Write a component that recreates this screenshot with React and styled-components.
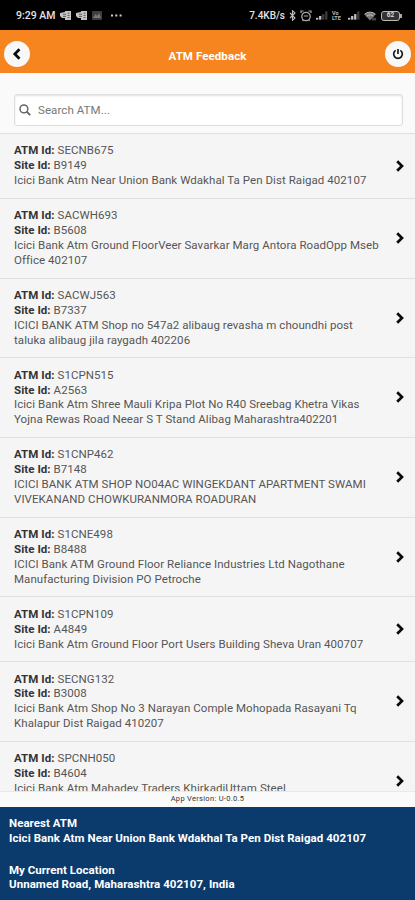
import React from "react";
import styled, { createGlobalStyle } from "styled-components";

const GlobalStyle = createGlobalStyle`
  * {
    box-sizing: border-box;
  }

  body {
    margin: 0;
    background: #fafafa;
    font-family: Roboto, "Liberation Sans", sans-serif;
    color: #555;
  }
`;

const ATMS = [
  {
    id: "SECNB675",
    site: "B9149",
    address: ["Icici Bank Atm Near Union Bank Wdakhal Ta Pen Dist Raigad 402107"]
  },
  {
    id: "SACWH693",
    site: "B5608",
    address: [
      "Icici Bank Atm Ground FloorVeer Savarkar Marg Antora RoadOpp Mseb",
      "Office 402107"
    ]
  },
  {
    id: "SACWJ563",
    site: "B7337",
    address: [
      "ICICI BANK ATM Shop no 547a2 alibaug revasha m choundhi post",
      "taluka alibaug jila raygadh 402206"
    ]
  },
  {
    id: "S1CPN515",
    site: "A2563",
    address: [
      "Icici Bank Atm Shree Mauli Kripa Plot No R40 Sreebag Khetra Vikas",
      "Yojna Rewas Road Neear S T Stand Alibag Maharashtra402201"
    ]
  },
  {
    id: "S1CNP462",
    site: "B7148",
    address: [
      "ICICI BANK ATM SHOP NO04AC WINGEKDANT APARTMENT SWAMI",
      "VIVEKANAND CHOWKURANMORA ROADURAN"
    ]
  },
  {
    id: "S1CNE498",
    site: "B8488",
    address: [
      "ICICI Bank ATM Ground Floor Reliance Industries Ltd Nagothane",
      "Manufacturing Division PO Petroche"
    ]
  },
  {
    id: "S1CPN109",
    site: "A4849",
    address: ["Icici Bank Atm Ground Floor Port Users Building Sheva Uran 400707"]
  },
  {
    id: "SECNG132",
    site: "B3008",
    address: [
      "Icici Bank Atm Shop No 3 Narayan Comple Mohopada Rasayani Tq",
      "Khalapur Dist Raigad 410207"
    ]
  },
  {
    id: "SPCNH050",
    site: "B4604",
    address: ["Icici Bank Atm Mahadev Traders KhirkadiUttam Steel", ""]
  }
];

const Screen = styled.div`
  display: flex;
  flex-direction: column;
  width: 415px;
  height: 900px;
  overflow: hidden;
`;

const StatusBar = styled.div`
  display: flex;
  flex: none;
  align-items: center;
  justify-content: space-between;
  height: 30px;
  padding: 1px 13px 0 16px;
  background: #000;
  color: #e4e4e4;
`;

const StatusGroup = styled.div`
  display: flex;
  align-items: center;
  gap: ${props => props.$gap}px;

  svg {
    display: block;
    flex: none;
  }
`;

const StatusText = styled.span`
  font-size: ${props => props.$size}px;
  font-weight: 500;
  line-height: 14px;
  white-space: nowrap;
`;

const Header = styled.header`
  display: flex;
  flex: none;
  align-items: center;
  justify-content: space-between;
  height: 43px;
  padding: 5px 4px 0;
  background: #f6841f;
`;

const Title = styled.h1`
  margin: 3px 0 0;
  color: #fff;
  font-size: 11.5px;
  font-weight: 700;
  line-height: 14px;
  letter-spacing: 0.08px;
`;

const RoundButton = styled.button`
  display: flex;
  align-items: center;
  justify-content: center;
  width: 26px;
  height: 26px;
  padding: 0;
  border: 0;
  border-radius: 50%;
  background: #f8f8f8;
  color: #000;
`;

const SearchArea = styled.div`
  flex: none;
  height: 60px;
  padding: 21px 12px 0 14px;
`;

const SearchBox = styled.label`
  display: flex;
  align-items: center;
  gap: 7px;
  height: 32px;
  padding: 0 5px 1px 4px;
  border: 1px solid #dedede;
  border-radius: 3px;
  background: #fff;
  box-shadow: inset 0 1px 2px rgba(0, 0, 0, 0.12);
`;

const SearchInput = styled.input`
  flex: 1;
  min-width: 0;
  padding: 0;
  border: 0;
  outline: 0;
  background: transparent;
  font-family: inherit;
  font-size: 11.5px;
  letter-spacing: 0.08px;

  &::placeholder {
    color: #777;
    opacity: 1;
  }
`;

const List = styled.div`
  flex: none;
  height: 658px;
  overflow: hidden;
  background: #f5f5f5;
`;

const Row = styled.div`
  display: flex;
  align-items: center;
  justify-content: space-between;
  padding: 9.4px 10px 9.75px 14px;
  border-top: 1px solid #e0e0e0;
`;

const Line = styled.div`
  height: 14.9px;
  font-size: 11.5px;
  line-height: 14.9px;
  letter-spacing: 0.06px;
  white-space: nowrap;
`;

const Label = styled.b`
  color: #333;
  font-weight: 700;
`;

const Version = styled.div`
  flex: none;
  height: 16px;
  border-top: 1px solid #e9e9e9;
  background: #fafafa;
  color: #333;
  font-size: 7.5px;
  line-height: 14px;
  letter-spacing: 0.3px;
  text-align: center;
`;

const Footer = styled.footer`
  display: flex;
  flex: 1;
  flex-direction: column;
  gap: 17px;
  padding: 9px 9px 0;
  background: #0b3b6d;
  color: #fff;
`;

const FooterLine = styled.div`
  font-size: 11.5px;
  font-weight: 700;
  line-height: 14.8px;
  letter-spacing: ${props => props.$spacing}px;
  white-space: nowrap;
`;

const ChevronIcon = ({ flip }) => (
  <svg width="10" height="14" viewBox="0 0 10 14">
    <path
      d={flip ? "M7.5 2.2 2.8 7l4.7 4.8" : "M2.2 2.2 7 7l-4.8 4.8"}
      fill="none"
      stroke="#0a0a0a"
      strokeWidth="2.7"
    />
  </svg>
);

const PowerIcon = () => (
  <svg width="12" height="12" viewBox="0 0 13 13">
    <path
      d="M4 2.6a4.7 4.7 0 1 0 5 0M6.5 1v5.5"
      fill="none"
      stroke="#151515"
      strokeWidth="1.8"
    />
  </svg>
);

const SearchIcon = () => (
  <svg width="12" height="12" viewBox="0 0 12 12">
    <circle cx="4.9" cy="4.9" r="3.9" fill="none" stroke="#666" strokeWidth="1.5" />
    <path d="M7.6 7.6 11.2 11.2" stroke="#666" strokeWidth="1.9" />
  </svg>
);

const NewsIcon = () => (
  <svg width="11" height="9" viewBox="0 0 11 9">
    <path d="M5 0h6v9H5V7H2L0 5V2l5-1z" fill="#c4c4c4" />
    <path d="M3 3.3h3M3 5.4h3M7.5 2.2h2M7.5 4.5h2M7.5 6.7h2" stroke="#444" strokeWidth=".8" />
  </svg>
);

const PictureIcon = () => (
  <svg width="10" height="9" viewBox="0 0 10 9">
    <rect width="10" height="9" rx="1" fill="#3d3d3d" />
    <path d="m1 7 2.5-4L5 5l2-3 2 5z" fill="#777" />
  </svg>
);

const DotsIcon = () => (
  <svg width="20" height="3" viewBox="0 0 20 3">
    <path d="M4 1.5h2M8.3 1.5h2M12.6 1.5h2" stroke="#ccc" strokeWidth="1.8" />
  </svg>
);

const BluetoothIcon = () => (
  <svg width="7" height="11" viewBox="0 0 7 11">
    <path d="m1 3 5 5-2.5 2.3V.7L6 3 1 8" fill="none" stroke="#bbb" strokeWidth="1.1" />
  </svg>
);

const AlarmIcon = () => (
  <svg width="12" height="12" viewBox="0 0 12 12">
    <circle cx="6" cy="6.5" r="4.2" fill="none" stroke="#aaa" strokeWidth="1.3" />
    <path
      d="M1 3V1h2.5M11 3V1H8.5M3.8 6h4.4M2.5 11l1-1.2M9.5 11l-1-1.2"
      fill="none"
      stroke="#aaa"
      strokeWidth="1.2"
    />
  </svg>
);

const SignalIcon = ({ bars }) => (
  <svg width="12" height="9" viewBox="0 0 13 9">
    {[2, 4, 6, 9].map((height, index) => (
      <rect
        key={index}
        x={index * 3.3}
        y={9 - height}
        width="2.5"
        height={height}
        fill={index < bars ? "#c0c0c0" : "#3c3c3c"}
      />
    ))}
  </svg>
);

const VolteLabel = styled.span`
  width: 12px;
  color: #bbb;
  font-size: 5.5px;
  font-weight: 700;
  line-height: 5px;
`;

const WifiIcon = () => (
  <svg width="12" height="10" viewBox="0 0 12 10">
    <path d="M.5 3.5a8 8 0 0 1 11 0L6 9.5z" fill="#777" />
    <path d="M.5 3.3a8 8 0 0 1 11 0M2.5 5.3a5 5 0 0 1 7 0" fill="none" stroke="#bbb" />
    <path d="M9 9.5V6.8M11 6.8v2.7" stroke="#aaa" strokeWidth=".8" />
  </svg>
);

const Battery = styled.span`
  display: flex;
  align-items: center;
  justify-content: center;
  width: 19px;
  height: 10px;
  border: 1.5px solid #bbb;
  border-radius: 3px;
  background: #333;
  color: #ddd;
  font-size: 6.5px;
  font-weight: 700;
  line-height: 7px;
`;

const BatteryTip = styled.span`
  width: 2px;
  height: 4px;
  background: #aaa;
`;

const AtmRow = ({ atm }) => (
  <Row>
    <div>
      <Line>
        <Label>ATM Id:</Label> {atm.id}
      </Line>
      <Line>
        <Label>Site Id:</Label> {atm.site}
      </Line>
      {atm.address.map((text, index) => (
        <Line key={index}>{text}</Line>
      ))}
    </div>
    <ChevronIcon />
  </Row>
);

const App = () => {
  return (
    <React.Fragment>
      <GlobalStyle />
      <Screen>
        <StatusBar>
          <StatusGroup $gap={5}>
            <StatusText $size={10.5}>9:29 AM</StatusText>
            <NewsIcon />
            <NewsIcon />
            <PictureIcon />
            <DotsIcon />
          </StatusGroup>
          <StatusGroup $gap={4}>
            <StatusText $size={10}>7.4KB/s</StatusText>
            <BluetoothIcon />
            <AlarmIcon />
            <SignalIcon bars={2} />
            <VolteLabel>Vo LTE</VolteLabel>
            <SignalIcon bars={3} />
            <StatusGroup $gap={5}>
              <WifiIcon />
              <StatusGroup $gap={0}>
                <Battery>62</Battery>
                <BatteryTip />
              </StatusGroup>
            </StatusGroup>
          </StatusGroup>
        </StatusBar>
        <Header>
          <RoundButton aria-label="Back">
            <ChevronIcon flip />
          </RoundButton>
          <Title>ATM Feedback</Title>
          <RoundButton aria-label="Log out">
            <PowerIcon />
          </RoundButton>
        </Header>
        <SearchArea>
          <SearchBox>
            <SearchIcon />
            <SearchInput placeholder="Search ATM..." />
          </SearchBox>
        </SearchArea>
        <List>
          {ATMS.map(atm => (
            <AtmRow key={atm.id} atm={atm} />
          ))}
        </List>
        <Version>App Version: U-0.0.5</Version>
        <Footer>
          <div>
            <FooterLine $spacing={0.03}>Nearest ATM</FooterLine>
            <FooterLine $spacing={0.06}>
              Icici Bank Atm Near Union Bank Wdakhal Ta Pen Dist Raigad 402107
            </FooterLine>
          </div>
          <div>
            <FooterLine $spacing={0.03}>My Current Location</FooterLine>
            <FooterLine $spacing={0.06}>Unnamed Road, Maharashtra 402107, India</FooterLine>
          </div>
        </Footer>
      </Screen>
    </React.Fragment>
  );
};

export default App;
